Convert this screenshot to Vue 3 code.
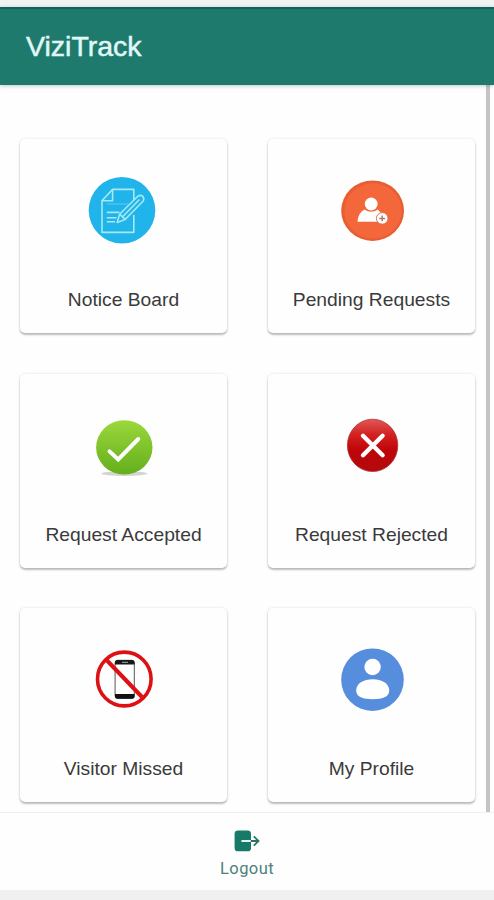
<template>
  <div class="screen">
    <div class="status-strip"></div>

    <header class="app-header">
      <h1 class="app-title">ViziTrack</h1>
    </header>

    <main class="content">
      <div class="card-grid">
        <button v-for="item in items" :key="item.id" class="card">
          <svg class="card-icon" viewBox="0 0 84 84" fill="none">
            <template v-if="item.id === 'notice'">
              <circle cx="40" cy="42.3" r="33.3" fill="#20b4ea" />
              <g stroke="#a5e9f5" stroke-width="1.6" stroke-linejoin="round">
                <path d="M51.8 32V21.4H30.6L20 32.8V64.4H51.8V47" />
                <path d="M30.6 21.4V32.8H20" />
                <path d="M24.8 44.4H37.5M24.8 49.8H34.5M24.8 53.8H33" />
                <path d="M25 36H46" stroke-width="0.7" opacity="0.7" />
                <path
                  d="M35.2 54.4L37.6 46.2L55.8 28.3Q58.6 26.4 60.7 28.4Q62.8 30.7 61 33.3L43.2 51.4Z"
                  fill="#20b4ea"
                />
                <path d="M37.6 46.2L43.2 51.4M40.6 48.7L57.4 31.5" />
              </g>
            </template>

            <template v-else-if="item.id === 'pending'">
              <ellipse cx="42.6" cy="42.7" rx="31.4" ry="30.2" fill="#e75f31" />
              <ellipse cx="43" cy="42.9" rx="28.6" ry="27.6" fill="#f4673a" />
              <circle cx="41.2" cy="36" r="6.4" fill="#fff" />
              <path
                d="M27.4 53.7Q28.2 44.7 34.5 41.6Q41.2 46 47.8 41.6L52 46V53.7Z"
                fill="#fff"
              />
              <circle
                cx="52.2"
                cy="50.4"
                r="5.8"
                fill="#fff"
                stroke="#e86f45"
                stroke-width="1"
              />
              <path
                d="M52.2 47.5V53.3M49.3 50.4H55.1"
                stroke="#a77c70"
                stroke-width="1.5"
              />
            </template>

            <template v-else-if="item.id === 'accepted'">
              <defs>
                <linearGradient id="green" x1="0" y1="0" x2="0" y2="1">
                  <stop offset="0" stop-color="#9bd83c" />
                  <stop offset="1" stop-color="#64ae1c" />
                </linearGradient>
              </defs>
              <ellipse cx="42.3" cy="70.6" rx="23" ry="2.4" fill="#d2d4d2" />
              <ellipse cx="42.3" cy="44.4" rx="28.2" ry="27.2" fill="url(#green)" />
              <path
                d="M27.5 48.4L36.2 56.4L56.3 36"
                stroke="#fff"
                stroke-width="4"
                stroke-linecap="round"
              />
            </template>

            <template v-else-if="item.id === 'rejected'">
              <defs>
                <linearGradient id="red" x1="0" y1="0" x2="0" y2="1">
                  <stop offset="0" stop-color="#e05757" />
                  <stop offset="0.3" stop-color="#d32020" />
                  <stop offset="0.6" stop-color="#be0508" />
                  <stop offset="1" stop-color="#b30a0d" />
                </linearGradient>
              </defs>
              <ellipse
                cx="42.6"
                cy="42.4"
                rx="25.2"
                ry="26.2"
                fill="url(#red)"
                stroke="#b33234"
                stroke-width="0.8"
              />
              <path
                d="M33 32.8L52.6 52.2M52.6 32.8L33 52.2"
                stroke="#fff"
                stroke-width="4.4"
                stroke-linecap="round"
              />
            </template>

            <template v-else-if="item.id === 'missed'">
              <rect
                x="33.1"
                y="23.3"
                width="19.2"
                height="38"
                rx="2.5"
                fill="#fff"
                stroke="#444"
                stroke-width="0.9"
              />
              <path d="M33 27.5V25.5Q33 23 35.5 23H50Q52.5 23 52.5 25.5V27.5Z" fill="#181818" />
              <path d="M33 57V59.2Q33 61.7 35.5 61.7H50Q52.5 61.7 52.5 59.2V57Z" fill="#111" />
              <path d="M40 25.3H46" stroke="#bbb" stroke-width="0.9" />
              <path d="M25 23.5L60 60" stroke="#dd1014" stroke-width="4" />
              <ellipse
                cx="42.3"
                cy="42"
                rx="26.8"
                ry="26.9"
                stroke="#dd1014"
                stroke-width="3.6"
              />
            </template>

            <template v-else>
              <circle cx="42.5" cy="42.7" r="31.3" fill="#578ddd" />
              <circle cx="42.6" cy="30" r="8.2" fill="#fff" />
              <path
                d="M26.2 53.5C26.2 46.5 33.5 42.3 42.7 42.3S59.2 46.5 59.2 53.5C59.2 60.2 52 62.2 42.7 62.2S26.2 60.2 26.2 53.5Z"
                fill="#fff"
              />
            </template>
          </svg>
          <span class="card-label">{{ item.label }}</span>
        </button>
      </div>
      <div class="scroll-thumb"></div>
    </main>

    <footer class="tab-bar">
      <button class="logout">
        <svg class="logout-icon" viewBox="0 0 26 22" fill="none">
          <rect x="0.6" y="0.5" width="16.4" height="20.8" rx="3.4" fill="#177a68" />
          <path d="M7.4 11H17" stroke="#fff" stroke-width="1.8" />
          <path
            d="M16.8 11H24M19.8 6.4L24.5 11L19.8 15.6"
            stroke="#2b7366"
            stroke-width="1.8"
          />
        </svg>
        <span class="logout-label">Logout</span>
      </button>
    </footer>
    <div class="bottom-strip"></div>
  </div>
</template>

<script setup>
const items = [
  { id: 'notice', label: 'Notice Board' },
  { id: 'pending', label: 'Pending Requests' },
  { id: 'accepted', label: 'Request Accepted' },
  { id: 'rejected', label: 'Request Rejected' },
  { id: 'missed', label: 'Visitor Missed' },
  { id: 'profile', label: 'My Profile' }
]
</script>

<style>
body {
  margin: 0;
  background: #fefefe;
}
</style>

<style scoped>
.screen {
  display: flex;
  flex-direction: column;
  height: 900px;
  overflow: hidden;
  font-family: 'Liberation Sans', Arial, sans-serif;
}

button {
  border: none;
  padding: 0;
  font-family: inherit;
  cursor: pointer;
}

.status-strip {
  flex: 0 0 7px;
  background: #f1f3f3;
}

.app-header {
  display: flex;
  align-items: center;
  flex: 0 0 78px;
  box-sizing: border-box;
  padding: 0 0 3px 26px;
  border-top: 2px solid #0d6458;
  background: #1f7a6e;
  box-shadow: 0 1px 4px rgba(0, 0, 0, 0.22);
  z-index: 1;
}

.app-title {
  margin: 0;
  color: #e0f7f6;
  font-size: 28.5px;
  font-weight: 400;
  line-height: 32px;
  -webkit-text-stroke: 0.5px #e0f7f6;
}

.content {
  display: flex;
  flex: 0 0 727px;
  justify-content: space-between;
  overflow: hidden;
}

.card-grid {
  display: grid;
  grid-template-columns: 207px 207px;
  grid-auto-rows: 194px;
  gap: 40.5px 41px;
  padding: 54px 0 0 20px;
}

.card {
  display: flex;
  flex-direction: column;
  align-items: center;
  box-sizing: border-box;
  padding-top: 29px;
  border-radius: 5px;
  background: #fefefe;
  box-shadow: 0 2px 2px rgba(0, 0, 0, 0.24), 0 0 3px rgba(0, 0, 0, 0.12);
}

.card-icon {
  width: 84px;
  height: 84px;
}

.card-label {
  margin-top: 36px;
  color: #3a3a3a;
  font-size: 19.25px;
  line-height: 24px;
  white-space: nowrap;
}

.scroll-thumb {
  width: 4px;
  margin-right: 4px;
  background: #c4c4c4;
}

.tab-bar {
  display: flex;
  justify-content: center;
  flex: 0 0 78px;
  box-sizing: border-box;
  border-top: 1px solid #f0f0f0;
  background: #fefefe;
}

.logout {
  display: flex;
  flex-direction: column;
  align-items: center;
  background: none;
  padding-top: 17px;
}

.logout-icon {
  width: 26px;
  height: 22px;
}

.logout-label {
  margin-top: 7px;
  color: #4b8178;
  font-family: Roboto, sans-serif;
  font-size: 16.5px;
  line-height: 20px;
  letter-spacing: 0.4px;
}

.bottom-strip {
  flex: 0 0 10px;
  background: #f0f0f0;
}
</style>
